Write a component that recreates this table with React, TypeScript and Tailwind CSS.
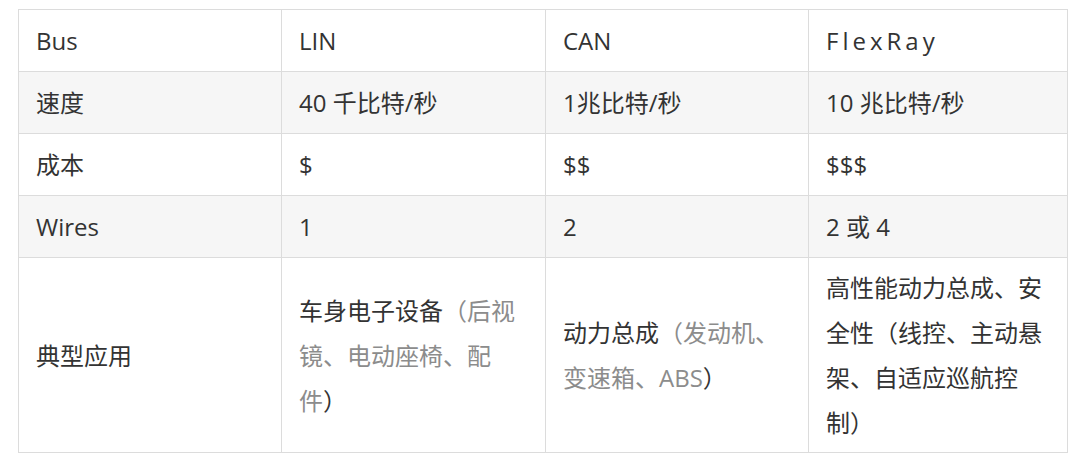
const font = { fontFamily: '"Open Sans", "Noto Sans CJK SC", sans-serif' };

type Cell = { dark: string; gray?: string; close?: string; spaced?: boolean };

const rows: { label: string; cells: Cell[]; tall?: boolean }[] = [
  { label: 'Bus', cells: [{ dark: 'LIN' }, { dark: 'CAN' }, { dark: 'FlexRay', spaced: true }] },
  { label: '速度', cells: [{ dark: '40 千比特/秒' }, { dark: '1兆比特/秒' }, { dark: '10 兆比特/秒' }] },
  { label: '成本', cells: [{ dark: '$' }, { dark: '$$' }, { dark: '$$$' }] },
  { label: 'Wires', cells: [{ dark: '1' }, { dark: '2' }, { dark: '2 或 4' }] },
  {
    label: '典型应用',
    tall: true,
    cells: [
      { dark: '车身电子设备', gray: '（后视镜、电动座椅、配件', close: '）' },
      { dark: '动力总成', gray: '（发动机、变速箱、ABS', close: '）' },
      { dark: '高性能动力总成、安全性（线控、主动悬架、自适应巡航控制）' },
    ],
  },
];

export default function App() {
  return (
    <div className="w-[1080px] h-[464px] bg-white pt-[9px] pl-[18px]" style={font}>
      <table className="w-[1050px] table-fixed border-collapse border border-[#dcdcdc] text-[24px] text-[#333333]">
        <colgroup>
          <col className="w-[263px]" />
          <col className="w-[264px]" />
          <col className="w-[263px]" />
          <col />
        </colgroup>
        <tbody>
          {rows.map((row, i) => (
            <tr key={row.label} className={i % 2 === 1 ? 'bg-[#f6f6f6]' : 'bg-white'}>
              <td className={`border border-[#dcdcdc] px-[17px] align-middle leading-[45px] ${row.tall ? 'h-[195px]' : 'h-[62px]'}`}>
                {row.label}
              </td>
              {row.cells.map((c, j) => (
                <td
                  key={j}
                  className={`border border-[#dcdcdc] px-[17px] align-middle leading-[45px] ${row.tall ? 'h-[195px]' : 'h-[62px]'}`}
                >
                  <span className={c.spaced ? 'tracking-[4px]' : ''}>{c.dark}</span>
                  {c.gray && <span className="text-[#8c8c8c]">{c.gray}</span>}
                  {c.close && <span>{c.close}</span>}
                </td>
              ))}
            </tr>
          ))}
        </tbody>
      </table>
    </div>
  );
}
